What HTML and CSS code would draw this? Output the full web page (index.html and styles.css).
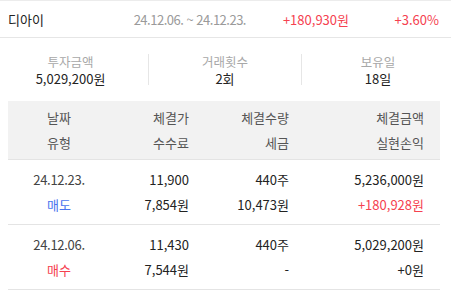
FILE: index.html
```html
<!DOCTYPE html>
<html lang="ko">
<head>
<meta charset="utf-8">
<link rel="stylesheet" href="styles.css">
</head>
<body>
<div class="summary">
  <div class="name">디아이</div>
  <div class="period">24.12.06. ~ 24.12.23.</div>
  <div class="profit red">+180,930원</div>
  <div class="rate red">+3.60%</div>
</div>
<div class="stats">
  <div class="stat first">
    <div class="label">투자금액</div>
    <div class="value">5,029,200원</div>
  </div>
  <div class="stat mid">
    <div class="label">거래횟수</div>
    <div class="value">2회</div>
  </div>
  <div class="stat last">
    <div class="label">보유일</div>
    <div class="value">18일</div>
  </div>
</div>
<div class="table">
  <div class="row head">
    <div class="c1">날짜</div><div class="c2">체결가</div><div class="c3">체결수량</div><div class="c4">체결금액</div>
    <div class="c1">유형</div><div class="c2">수수료</div><div class="c3">세금</div><div class="c4">실현손익</div>
  </div>
  <div class="row">
    <div class="c1 date">24.12.23.</div><div class="c2">11,900</div><div class="c3">440주</div><div class="c4">5,236,000원</div>
    <div class="c1 blue">매도</div><div class="c2">7,854원</div><div class="c3">10,473원</div><div class="c4 red">+180,928원</div>
  </div>
  <div class="row">
    <div class="c1 date">24.12.06.</div><div class="c2">11,430</div><div class="c3">440주</div><div class="c4">5,029,200원</div>
    <div class="c1 red">매수</div><div class="c2">7,544원</div><div class="c3">-</div><div class="c4">+0원</div>
  </div>
</div>
</body>
</html>
```

FILE: styles.css
```css
* { box-sizing: border-box; }
html, body { margin: 0; padding: 0; background: #fff; }
body {
  font-family: "Noto Sans CJK KR", "Noto Sans", sans-serif;
  font-size: 13px;
  color: #222;
  line-height: 1;
}
.red { color: #f5414f; }
.blue { color: #4a74ee; }

.summary {
  display: grid;
  grid-template-columns: 1fr 140px 103px 90px;
  align-items: center;
  height: 38px;
  padding: 0 12px 0 8px;
  border-top: 1px solid #ececec;
  border-bottom: 1px solid #e6e6e6;
  white-space: nowrap;
}
.summary .period, .summary .profit, .summary .rate { text-align: right; }
.summary .period { color: #9a9a9a; letter-spacing: -0.5px; }

.stats {
  display: grid;
  grid-template-columns: 148px 153px 150px;
  height: 63px;
  align-items: center;
}
.stat {
  display: flex;
  flex-direction: column;
  align-items: center;
  gap: 4px;
  padding-top: 2px;
}
.stat.first { padding-right: 7px; }
.stat.last { padding-left: 3px; }
.stat.mid, .stat.last { border-left: 1px solid #e6e6e6; }
.stat .label { color: #a8a8a8; font-size: 12.5px; }
.stat .value { color: #222; }

.table { margin: 0 11px 0 8px; }
.row {
  display: grid;
  grid-template-columns: 102px 79px 100px 1fr;
  grid-template-rows: 25px 25px;
  align-content: center;
  align-items: center;
  padding-right: 16px;
  height: 65px;
  border-bottom: 1px solid #e4e4e4;
}
.row.head {
  background: #f2f2f2;
  height: 59px;
  color: #555;
}
.row .c1 { text-align: center; }
.row .c2, .row .c3, .row .c4 { text-align: right; }
.date { color: #444; letter-spacing: -0.3px; }
```
